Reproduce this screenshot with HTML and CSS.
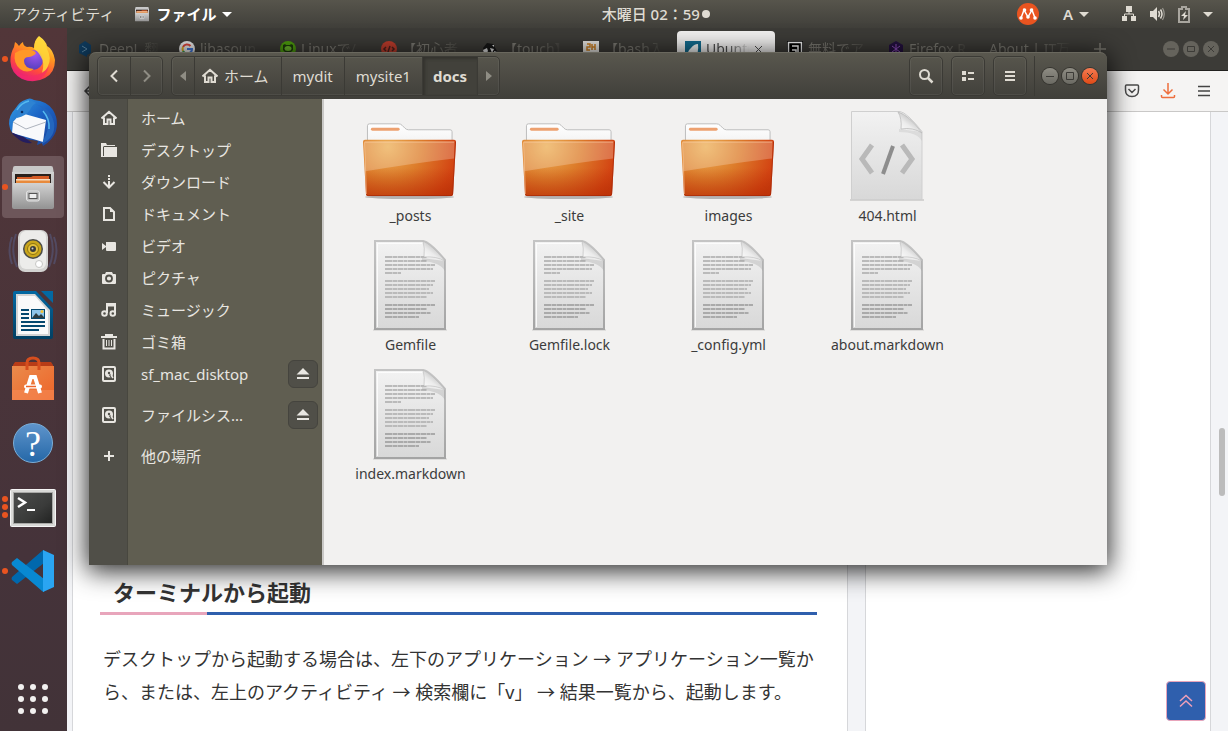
FILE: index.html
```html
<!DOCTYPE html>
<html lang="ja">
<head>
    <meta charset="UTF-8">
    <title>docs</title>
    <link rel="stylesheet" href="styles.css">
</head>
<body>
    <!-- Shared icons -->
    <svg class="defs" aria-hidden="true">
        <defs>
            <radialGradient id="folderFill" gradientUnits="userSpaceOnUse" cx="26" cy="40" r="76">
                <stop offset="0" stop-color="#ecae55"/>
                <stop offset="0.45" stop-color="#dd7d2b"/>
                <stop offset="0.9" stop-color="#d34513"/>
                <stop offset="1" stop-color="#cc3e10"/>
            </radialGradient>
            <linearGradient id="folderShade" x1="0" y1="0" x2="0" y2="1">
                <stop offset="0.5" stop-color="#b02800" stop-opacity="0"/>
                <stop offset="1" stop-color="#b02800" stop-opacity="0.5"/>
            </linearGradient>
            <linearGradient id="paper" x1="0" y1="0" x2="0" y2="1">
                <stop offset="0" stop-color="#f2f2f2"/>
                <stop offset="1" stop-color="#d8d8d8"/>
            </linearGradient>
            <linearGradient id="paperEdge" x1="0" y1="0" x2="0" y2="1">
                <stop offset="0" stop-color="#c4c4c4"/>
                <stop offset="1" stop-color="#a4a4a4"/>
            </linearGradient>
            <linearGradient id="curl" x1="0" y1="1" x2="0.6" y2="0.3">
                <stop offset="0" stop-color="#ffffff"/>
                <stop offset="0.6" stop-color="#ececec"/>
                <stop offset="1" stop-color="#c4c4c4"/>
            </linearGradient>
            <linearGradient id="tabPaper" x1="0" y1="0" x2="0" y2="1">
                <stop offset="0" stop-color="#ffffff"/>
                <stop offset="0.7" stop-color="#f4f4f4"/>
                <stop offset="1" stop-color="#cfcfcf"/>
            </linearGradient>
            <linearGradient id="fox" x1="0.8" y1="0" x2="0.3" y2="1">
                <stop offset="0" stop-color="#fff44f"/>
                <stop offset="0.35" stop-color="#ff9a1f"/>
                <stop offset="0.7" stop-color="#ff4a3d"/>
                <stop offset="1" stop-color="#e31587"/>
            </linearGradient>
            <radialGradient id="foxGlobe" cx="0.6" cy="0.2" r="0.9">
                <stop offset="0" stop-color="#a257f0"/>
                <stop offset="1" stop-color="#4b3cb8"/>
            </radialGradient>
            <linearGradient id="bird" x1="0" y1="0" x2="1" y2="1">
                <stop offset="0" stop-color="#35a0e6"/>
                <stop offset="0.5" stop-color="#1b62c4"/>
                <stop offset="1" stop-color="#1c3f94"/>
            </linearGradient>
            <linearGradient id="steel" x1="0" y1="0" x2="0" y2="1">
                <stop offset="0" stop-color="#d2d2d2"/>
                <stop offset="1" stop-color="#959595"/>
            </linearGradient>
            <linearGradient id="writer" x1="0" y1="0" x2="0" y2="1">
                <stop offset="0" stop-color="#0369a3"/>
                <stop offset="1" stop-color="#023f62"/>
            </linearGradient>
            <linearGradient id="bag" x1="0" y1="0" x2="1" y2="1">
                <stop offset="0" stop-color="#ea8b4c"/>
                <stop offset="1" stop-color="#ee6428"/>
            </linearGradient>
            <linearGradient id="screen" x1="0" y1="0" x2="1" y2="1">
                <stop offset="0" stop-color="#4c4d4c"/>
                <stop offset="0.6" stop-color="#3a3b3a"/>
                <stop offset="1" stop-color="#222322"/>
            </linearGradient>
        </defs>

        <symbol id="folder" viewBox="1 1 97 97">
            <ellipse cx="48" cy="91" rx="45" ry="2" fill="#000" opacity="0.25"/>
            <path d="M5.500 40V19q0-2 2-2H37q2 0 3.500 1.500l3 3q1.500 1.500 3.500 1.500H89q2 0 2 2V42z" fill="url(#tabPaper)" stroke="#bdbdbd"/>
            <rect x="9" y="21" width="29" height="3" rx="1.500" fill="#eda170"/>
            <path d="M3 33H93q2 0 2 2l-3 53q0 2-2 2H6q-2 0-2-2L1 35q0-2 2-2z" fill="url(#folderFill)"/>
            <path d="M3 33H93q2 0 2 2l-3 53q0 2-2 2H6q-2 0-2-2L1 35q0-2 2-2z" fill="url(#folderShade)"/>
            <path d="M2.500 34.500H93.500L93 52Q50 57 3.500 65z" fill="#fff" opacity="0.23"/>
            <path d="M4.500 88L2.500 35.500M3 35.500H93" stroke="#ffd9b0" opacity="0.5" fill="none"/>
            <path d="M94.500 35l-3 53q0 1.500-2 1.500H6.500q-2 0-2-1.500" stroke="#a42508" opacity="0.65" fill="none"/>
        </symbol>

        <symbol id="textfile" viewBox="1 0 96 96">
            <path d="M11 92H85V94H11z" fill="#000" opacity="0.08"/>
            <path d="M13 4H61q7 1 22 19V92H13z" fill="url(#paper)" stroke="url(#paperEdge)" stroke-width="2"/>
            <path d="M15.500 90V6.500H60" fill="none" stroke="#fff" opacity="0.8"/>
            <g stroke="#bababa" stroke-width="2" stroke-dasharray="7.500 0.500 4.500 0.500 5.500 0.500 3.500 0.500">
                <path d="M23 20h42M23 24h42M23 28h50M23 32h48M23 36h16"/>
                <path d="M23 44h50M23 48h48M23 52h44M23 56h48M23 60h42"/>
                <path d="M23 68h50M23 72h42M23 76h46M23 80h34" stroke="#aaa"/>
            </g>
            <path d="M60 21l23 3v10q-5-9-23-10z" fill="#999" opacity="0.3"/>
            <path d="M61 4q2 7 1 16 12-1 21 4Q70 8 61 4z" fill="url(#curl)" stroke="#b8b8b8" stroke-width="0.600"/>
        </symbol>

        <symbol id="htmlfile" viewBox="1 0 96 96">
            <path d="M11 91H85V93H11z" fill="#000" opacity="0.12"/>
            <path d="M12.500 3.500H61q7 1 22 20V91.500H12.500z" fill="url(#paper)" stroke="#cfcfcf"/>
            <path d="M33 37L23 51 33 65M63 37L73 51 63 65" fill="none" stroke="#b9b9b9" stroke-width="5"/>
            <path d="M54 38L44 66" stroke="#8d8d8d" stroke-width="4"/>
            <path d="M60 21l23 3v9q-5-9-23-9z" fill="#aaa" opacity="0.25"/>
            <path d="M59 4q4 6 3 17 12-2 21 4Q70 7 59 4z" fill="url(#curl)" stroke="#bbb" stroke-width="0.800"/>
        </symbol>

        <symbol id="home" viewBox="0 0 16 16">
            <path d="M0.500 8.500L8 1.800l7.500 6.700M3 7.500V14h3.500V9.500h3V14H13V7.500" fill="none" stroke="currentColor" stroke-width="2"/>
        </symbol>

        <symbol id="disk" viewBox="0 0 16 16">
            <rect x="2" y="1" width="12" height="14" rx="1" fill="none" stroke="currentColor" stroke-width="2"/>
            <circle cx="8" cy="7.500" r="4" fill="currentColor"/>
            <circle cx="8" cy="7" r="1.200" fill="#504f48"/>
            <path d="M8.500 8.500l3 4" stroke="#504f48" stroke-width="1.500"/>
            <path d="M10 9l2 3" stroke="currentColor" stroke-width="1.500"/>
        </symbol>

        <symbol id="eject" viewBox="0 0 14 14">
            <path d="M7 1l6.500 6.500H.5zM1 10h12v2H1z" fill="currentColor"/>
        </symbol>

        <symbol id="cabinet" viewBox="0 0 48 48">
            <path d="M4 5q0-2 2-2h36q2 0 2 2l1 6H3z" fill="#c8c8c8"/>
            <path d="M3 9h42v35q0 2-2 2H5q-2 0-2-2z" fill="url(#steel)"/>
            <path d="M6 11h36v12H6z" fill="#2a201c"/>
            <path d="M8 14h14l2-1h16v8H8z" fill="#d45a24"/>
            <path d="M7 16h34v3H7z" fill="#f6dcc0"/>
            <path d="M7 17.500h34v5H7z" fill="#e88a3c"/>
            <path d="M4 20h40v23q0 2-2 2H6q-2 0-2-2z" fill="url(#steel)"/>
            <rect x="17.500" y="28" width="13" height="10" rx="2" fill="#bbb" stroke="#e4e4e4"/>
            <rect x="20" y="30.500" width="8" height="5" fill="#eee" stroke="#555"/>
        </symbol>
    </svg>

    <header class="topbar">
        <div class="topbar-left">
            <button class="top-item">アクティビティ</button>
            <button class="top-item app-menu">
                <svg width="16" height="16"><use href="#cabinet"/></svg>
                ファイル
                <i class="caret"></i>
            </button>
        </div>
        <button class="top-item clock">木曜日 02：59<i class="notice"></i></button>
        <div class="topbar-right">
            <svg width="22" height="22" viewBox="0 0 22 22">
                <circle cx="11" cy="11" r="11" fill="#e95420"/>
                <path d="M4 15L7 7l4 7 4-7 3 8" fill="none" stroke="#fff" stroke-width="1.500"/>
                <g fill="#fff"><circle cx="4" cy="15" r="1.800"/><circle cx="7.500" cy="7" r="1.800"/><circle cx="11" cy="14" r="1.800"/><circle cx="14.500" cy="7" r="1.800"/><circle cx="18" cy="15" r="1.800"/></g>
            </svg>
            <button class="top-item input-menu">A<i class="caret"></i></button>
            <button class="top-item system-menu" aria-label="システム">
                <svg width="16" height="16" viewBox="0 0 16 16"><path d="M5 0h6v6H5zM1 10h5v5H1zM10 10h5v5h-5z" fill="#dfdbd2"/><path d="M8 6v2M3.500 10V8h9v2" fill="none" stroke="#dfdbd2"/></svg>
                <svg width="16" height="16" viewBox="0 0 16 16"><path d="M1 5h3l4-4v14l-4-4H1z" fill="#dfdbd2"/><path d="M9.500 5q2 3 0 6M11.500 3.500q3 4.500 0 9" stroke="#dfdbd2" stroke-width="1.500" fill="none"/><path d="M13.500 2q3.500 6 0 12" stroke="#99978f" stroke-width="1.200" fill="none"/></svg>
                <svg width="14" height="17" viewBox="0 0 14 17"><path d="M5 1h4v2h3v13H2V3h3z" fill="none" stroke="#a9a69f" stroke-width="2"/><path d="M9 5L4 10h3l-1 4 5-5H8z" fill="#dfdbd2"/></svg>
                <i class="caret"></i>
            </button>
        </div>
    </header>

    <div class="desktop">
        <nav class="dock">
            <button class="dock-item" aria-label="Firefox">
                <span class="running"><i></i></span>
                <svg width="48" height="48" viewBox="0 0 48 48">
                    <path d="M30 1q7 5 8 10 6 3 8 14 0 13-10 18-11 6-23 1Q2 38 1.500 27 1 19 5 12l1-5q2 1 4 4 2-3 4-4 0 4 4 5 4-1 7 1 0-8 5-12z" fill="url(#fox)"/>
                    <circle cx="24" cy="25" r="10" fill="url(#foxGlobe)"/>
                    <path d="M30 2q7 5 8 12 5 9 1 17-2 5-6 7 3-10-1-16-3-6-7-8 0-8 5-12z" fill="#ffd83a" opacity="0.85"/>
                    <path d="M6 18q6-4 12-3 6-1 9 3-2 3-7 4-5 0-5 4 0 7 10 8-7 5-14 0-7-6-5-16z" fill="#ff9828"/>
                    <path d="M3 33q7 9 19 8 12-1 18-10-2 10-12 14-15 4-25-12z" fill="#f52b68" opacity="0.65"/>
                </svg>
            </button>
            <button class="dock-item" aria-label="Thunderbird">
                <svg width="50" height="50" viewBox="0 0 50 50">
                    <path d="M17 2q5-3 9 0 13 1 19 10 6 10 3 21-3 9-13 15l-1-3-5 2 1-4-18-3Q2 37 1 26 1 17 7 11q5-8 10-9z" fill="url(#bird)"/>
                    <path d="M5 24l8-9 25 7-3 22-10-3L4 35z" fill="#f8f9fb"/>
                    <path d="M5 24l13 7 20-7" fill="none" stroke="#adb3bd"/>
                    <path d="M15 4q7-4 13 1-4 2-6 7-4 6-13 8 0-11 6-16z" fill="#2e83d2"/>
                    <path d="M27 6q10 2 12 15 3 10-4 22l-1 3q14-7 12-21Q43 10 27 6z" fill="#2466be"/>
                    <path d="M3 34q6 3 13 5l8 6q-9 1-15-5-4-3-6-6z" fill="#251d5e"/>
                    <path d="M9 12q4-7 12-9M35 13q7 8 6 18" fill="none" stroke="#54b8ef" stroke-width="1.500"/>
                    <circle cx="14" cy="14" r="1.300" fill="#0b2c60"/>
                </svg>
            </button>
            <button class="dock-item active" aria-label="ファイル">
                <span class="running"><i></i></span>
                <svg width="48" height="48"><use href="#cabinet"/></svg>
            </button>
            <button class="dock-item" aria-label="Rhythmbox">
                <svg width="50" height="50" viewBox="0 0 50 50">
                    <path d="M8 8q-6 16 1 33M4 11q-5 13 0 27M42 8q6 16-1 33M46 11q5 13 0 27" fill="none" stroke="#57608a" stroke-width="2" opacity="0.5"/>
                    <rect x="10" y="4" width="30" height="42" rx="7" fill="#d3d3d1"/>
                    <rect x="12" y="5" width="26" height="38" rx="6" fill="#ececea"/>
                    <circle cx="25" cy="23" r="10" fill="#4b4c48"/>
                    <circle cx="25" cy="23" r="8.500" fill="#c9a51b"/>
                    <circle cx="25" cy="23" r="5.500" fill="#e4c13a" stroke="#8d7411"/>
                    <circle cx="25" cy="23" r="3" fill="#3b3c3a"/>
                    <circle cx="24.500" cy="22.500" r="1" fill="#ccc"/>
                    <circle cx="31" cy="38" r="3.500" fill="#fff" stroke="#c6c6c4"/>
                </svg>
            </button>
            <button class="dock-item" aria-label="LibreOffice Writer">
                <svg width="48" height="48" viewBox="0 0 48 48">
                    <path d="M6 0h21l17 18v28q0 2-2 2H6q-2 0-2-2V2q0-2 2-2z" fill="url(#writer)"/>
                    <path d="M32 0h12v12z" fill="#0369a3"/>
                    <path d="M7 3h19l15 16v26H7z" fill="#d4d4d4"/>
                    <path d="M9 5h17l13 15v23H9z" fill="#fafafa"/>
                    <path d="M12 19h8M12 23h8M12 27h8M12 31h24M12 35h24M12 39h18" stroke="#05486f" stroke-width="2"/>
                    <rect x="22.500" y="18.500" width="13" height="9" fill="#8ec5ea" stroke="#05486f"/>
                    <circle cx="33" cy="20.500" r="1.500" fill="#f5c235"/>
                    <path d="M23 27l4-5 3 3 2-2 3 3v1z" fill="#2d3c40"/>
                </svg>
            </button>
            <button class="dock-item" aria-label="Ubuntu Software">
                <svg width="48" height="48" viewBox="0 0 48 48">
                    <path d="M4 10l2-3h36l2 3v4H4z" fill="#b83c17"/>
                    <path d="M3 11h42v34H3z" fill="url(#bag)"/>
                    <path d="M3 35h42v10H3z" fill="#f58a56" opacity="0.6"/>
                    <path d="M18 15V8q0-5 6-5t6 5v7" fill="none" stroke="#d64e1e" stroke-width="3"/>
                    <path d="M17 38l5-16h4l5 16" fill="none" stroke="#fff" stroke-width="4"/>
                    <rect x="15" y="29.500" width="18" height="4" rx="2" fill="#fff"/>
                    <path d="M17 31.500h10" stroke="#ee6428" stroke-width="1.500"/>
                </svg>
            </button>
            <button class="dock-item" aria-label="ヘルプ">
                <span class="help-icon">?</span>
            </button>
            <button class="dock-item" aria-label="端末">
                <span class="running"><i></i><i></i><i></i></span>
                <svg width="48" height="48" viewBox="0 0 48 48">
                    <rect x="1.500" y="6.500" width="45" height="37" rx="1" fill="#d9d9d7" stroke="#f5f5f5"/>
                    <path d="M4 9h40v32H4z" fill="#a9a9a7"/>
                    <path d="M5 10h38v30H5z" fill="url(#screen)"/>
                    <path d="M9 15l7 4.500-7 4.500" fill="none" stroke="#fff" stroke-width="2.500"/>
                    <path d="M18 27h8" stroke="#fff" stroke-width="2"/>
                </svg>
            </button>
            <button class="dock-item" aria-label="Visual Studio Code">
                <span class="running"><i></i></span>
                <svg width="44" height="44" viewBox="0 0 44 44">
                    <path d="M1 31l5 4L33 14V1q-1 0-2 1L1 28q-1 2 0 3z" fill="#0068ad"/>
                    <path d="M1 13l5-4L33 30v13q-1 0-2-1L1 16q-1-2 0-3z" fill="#0889d2"/>
                    <path d="M32 1l11 5v32l-11 5z" fill="#2aa5f2"/>
                </svg>
            </button>
            <button class="dock-item apps" aria-label="アプリケーションを表示する">
                <svg width="32" height="32" viewBox="0 0 32 32" fill="#f2f1f0">
                    <circle cx="4" cy="4" r="3"/><circle cx="16" cy="4" r="3"/><circle cx="28" cy="4" r="3"/>
                    <circle cx="4" cy="16" r="3"/><circle cx="16" cy="16" r="3"/><circle cx="28" cy="16" r="3"/>
                    <circle cx="4" cy="28" r="3"/><circle cx="16" cy="28" r="3"/><circle cx="28" cy="28" r="3"/>
                </svg>
            </button>
        </nav>

        <div class="browser">
            <div class="tabs">
                <button class="tab"><svg width="16" height="16" viewBox="0 0 16 16"><path d="M7 0l6 4v8l-4 2v2l-2-1-6-3V4z" fill="#0f3a5c"/><path d="M4 5l5 3-5 3" stroke="#537891" fill="none"/></svg><span>DeepL 翻</span></button>
                <button class="tab"><svg width="16" height="16" viewBox="0 0 16 16"><circle cx="8" cy="8" r="8" fill="#e8e8e8"/><path d="M11.500 5A4.500 4.500 0 0 0 4 6" stroke="#d9453a" stroke-width="2" fill="none"/><path d="M4 6a5 5 0 0 0 0 4" stroke="#e6b020" stroke-width="2" fill="none"/><path d="M4 10a4.500 4.500 0 0 0 6 2" stroke="#35994c" stroke-width="2" fill="none"/><path d="M8 8h5q0 3-3 4.500" stroke="#4078dd" stroke-width="2" fill="none"/></svg><span>libasoun</span></button>
                <button class="tab"><svg width="16" height="16" viewBox="0 0 16 16"><circle cx="8" cy="8" r="8" fill="#4c9c0d"/><path d="M3 4l2-1 1 1h4l1-1 2 1v5q-2 3-5 3T3 9z" fill="#1c3a0a"/><ellipse cx="8" cy="7.500" rx="3.500" ry="2.500" fill="#6ab52c"/></svg><span>Linuxで/</span></button>
                <button class="tab"><svg width="16" height="16" viewBox="0 0 16 16"><circle cx="8" cy="8" r="8" fill="#bd3c2c"/><path d="M5 6L3 8l2 2M11 6l2 2-2 2M9 5l-2 6" stroke="#4d211c" stroke-width="1.500" fill="none"/></svg><span>【初心者</span></button>
                <button class="tab"><svg width="16" height="16" viewBox="0 0 16 16"><path d="M1 7l4-5 6 1 4 7-3 5H3z" fill="#161616"/><path d="M1 9l4-2 1 3-3 5zM8 7l4 1-2 4zM10 4h2v2zM12 10l3 1-2 4z" fill="#ddd"/></svg><span>【touch】</span></button>
                <button class="tab"><svg width="16" height="16" viewBox="0 0 16 16"><path d="M0 0h16v16H0z" fill="#e5e3df"/><path d="M4 3h3v3H4v3h3M9 3v6M12 3v6M9 6h3" stroke="#c97d21" stroke-width="1.500" fill="none"/></svg><span>【bash入</span></button>
                <button class="tab selected"><svg width="16" height="16" viewBox="0 0 16 16"><path d="M0 0h16v16H0z" fill="#136b8e"/><path d="M13 3q1 9-3 13H4q-3-5 2-9 3-4 7-4z" fill="#f1f3f3"/></svg><span>Ubuntu</span><svg width="9" height="9" viewBox="0 0 9 9"><path d="M1 1l7 7M8 1L1 8" stroke="#4c4c4c"/></svg></button>
                <button class="tab"><svg width="16" height="16" viewBox="0 0 16 16"><path d="M0 0h16v16H0z" fill="#000"/><path d="M1.500 1.500h13v13h-13zM5 5h6v9M5 9h4v5" stroke="#eee" stroke-width="1.500" fill="none"/></svg><span>無料でア</span></button>
                <button class="tab"><svg width="16" height="16" viewBox="0 0 16 16"><path d="M8 0l7 4v8l-7 4-7-4V4z" fill="#24113f"/><path d="M8 3v10M4 5l8 6M12 5l-8 6" stroke="#8d4db8" fill="none"/></svg><span>Firefox R</span></button>
                <button class="tab"><span>About | IT万</span></button>
                <button class="new-tab" aria-label="新しいタブ"><svg width="14" height="14" viewBox="0 0 14 14"><path d="M7 1v12M1 7h12" stroke="#77756e" stroke-width="1.500"/></svg></button>
                <div class="controls dim">
                    <button aria-label="最小化"><svg width="16" height="16" viewBox="0 0 16 16"><path d="M4 8h8"/></svg></button>
                    <button aria-label="最大化"><svg width="16" height="16" viewBox="0 0 16 16"><path d="M4.500 5.500h7v5h-7z"/></svg></button>
                    <button aria-label="閉じる"><svg width="16" height="16" viewBox="0 0 16 16"><path d="M5 5l6 6M11 5l-6 6"/></svg></button>
                </div>
            </div>
            <div class="toolbar">
                <button aria-label="戻る"><svg width="16" height="16" viewBox="0 0 16 16"><path d="M15 8H2M7 3L2 8l5 5" fill="none" stroke="#444" stroke-width="1.500"/></svg></button>
                <div class="toolbar-end">
                    <button aria-label="Pocket"><svg width="16" height="16" viewBox="0 0 16 16"><path d="M2.500 2h11q1 0 1 1v4q0 6.500-6.500 6.500T1.500 7V3q0-1 1-1zM4.500 6L8 9.500 11.500 6" fill="none" stroke="#4a4a4a" stroke-width="1.500"/></svg></button>
                    <button aria-label="ダウンロード"><svg width="16" height="16" viewBox="0 0 16 16"><path d="M8 0v11M3.500 6.500L8 11l4.500-4.500M1.500 12v1.500q0 1 1 1h11q1 0 1-1V12" fill="none" stroke="#ee6e3d" stroke-width="1.500"/></svg></button>
                    <button aria-label="メニュー"><svg width="16" height="16" viewBox="0 0 16 16"><path d="M2 3.500h12M2 8h12M2 12.500h12" stroke="#444" stroke-width="1.500"/></svg></button>
                </div>
            </div>
            <div class="page">
                <article class="article">
                    <h2>ターミナルから起動</h2>
                    <p>デスクトップから起動する場合は、左下のアプリケーション → アプリケーション一覧から、または、左上のアクティビティ → 検索欄に「v」 → 結果一覧から、起動します。</p>
                </article>
                <aside class="side"></aside>
                <div class="scrollbar"></div>
                <button class="to-top" aria-label="トップへ戻る"><svg width="14" height="14" viewBox="0 0 14 14"><path d="M1 7l6-5.500L13 7M1 12.500L7 7l6 5.500" fill="none" stroke="#f0a0b8" stroke-width="1.500"/></svg></button>
            </div>
        </div>
    </div>

    <section class="window">
        <header class="titlebar">
            <div class="linked">
                <button class="nav-btn" aria-label="戻る"><svg width="16" height="16" viewBox="0 0 16 16"><path d="M11 2.500L5.500 8l5.500 5.500" fill="none" stroke="currentColor" stroke-width="2"/></svg></button>
                <button class="nav-btn off" aria-label="進む"><svg width="16" height="16" viewBox="0 0 16 16"><path d="M5 2.500L10.500 8 5 13.500" fill="none" stroke="currentColor" stroke-width="2"/></svg></button>
            </div>
            <div class="linked path">
                <button class="path-arrow off" aria-label="左へ"><svg width="6" height="10" viewBox="0 0 6 10"><path d="M6 0v10L0 5z" fill="currentColor"/></svg></button>
                <button class="crumb"><svg width="16" height="16"><use href="#home"/></svg>ホーム</button>
                <button class="crumb">mydit</button>
                <button class="crumb">mysite1</button>
                <button class="crumb current">docs</button>
                <button class="path-arrow off" aria-label="右へ"><svg width="6" height="10" viewBox="0 0 6 10"><path d="M0 0v10l6-5z" fill="currentColor"/></svg></button>
            </div>
            <div class="tools">
                <button class="tool" aria-label="検索"><svg width="16" height="16" viewBox="0 0 16 16"><circle cx="6.500" cy="6.500" r="4.500" fill="none" stroke="currentColor" stroke-width="2"/><path d="M10 10l4.500 4.500" stroke="currentColor" stroke-width="2.500"/></svg></button>
                <button class="tool" aria-label="表示"><svg width="16" height="16" viewBox="0 0 16 16"><path d="M2 3h4v4H2zM2 9h4v4H2zM8 4h6v2H8zM8 10h6v2H8z" fill="currentColor"/></svg></button>
                <button class="tool" aria-label="メニュー"><svg width="16" height="16" viewBox="0 0 16 16"><path d="M3 3h10v2H3zM3 7h10v2H3zM3 11h10v2H3z" fill="currentColor"/></svg></button>
            </div>
            <div class="controls">
                <button aria-label="最小化"><svg width="16" height="16" viewBox="0 0 16 16"><path d="M4 8.500h8"/></svg></button>
                <button aria-label="最大化"><svg width="16" height="16" viewBox="0 0 16 16"><path d="M4.500 4.500h7v7h-7z"/></svg></button>
                <button class="close" aria-label="閉じる"><svg width="16" height="16" viewBox="0 0 16 16"><path d="M5 5l6 6M11 5l-6 6"/></svg></button>
            </div>
        </header>
        <div class="window-body">
            <nav class="places">
                <a href="#" class="place"><svg width="16" height="16"><use href="#home"/></svg><span>ホーム</span></a>
                <a href="#" class="place"><svg width="16" height="16" viewBox="0 0 16 16"><path d="M0 1h5l1 2h8v1H3l-1 1v9h1V5h13v10H0z" fill="currentColor"/></svg><span>デスクトップ</span></a>
                <a href="#" class="place"><svg width="16" height="16" viewBox="0 0 16 16"><path d="M7 1h2v2H7zM7 4h2v2H7zM7 7h2v5H7z" fill="currentColor"/><path d="M2.500 8L8 13.500 13.500 8" fill="none" stroke="currentColor" stroke-width="2"/></svg><span>ダウンロード</span></a>
                <a href="#" class="place"><svg width="16" height="16" viewBox="0 0 16 16"><path d="M3 2h6l4 4v8H3z" fill="none" stroke="currentColor" stroke-width="2"/><path d="M9 2v4h4z" fill="currentColor"/></svg><span>ドキュメント</span></a>
                <a href="#" class="place"><svg width="16" height="16" viewBox="0 0 16 16"><path d="M5 4h9q1 0 1 1v7q0 1-1 1H6q-1 0-1-1V9l-4 3V5l4 3z" fill="currentColor"/></svg><span>ビデオ</span></a>
                <a href="#" class="place"><svg width="16" height="16" viewBox="0 0 16 16"><path d="M5 2h6l1 2h2q1 0 1 1v8q0 1-1 1H2q-1 0-1-1V5q0-1 1-1h2z" fill="currentColor"/><circle cx="8" cy="8.500" r="3" fill="none" stroke="#504f48" stroke-width="1.800"/></svg><span>ピクチャ</span></a>
                <a href="#" class="place"><svg width="16" height="16" viewBox="0 0 16 16"><path d="M6 11V2h8v9M6 3.500h8" fill="none" stroke="currentColor" stroke-width="2"/><circle cx="3.500" cy="11.500" r="2.300" fill="none" stroke="currentColor" stroke-width="2"/><circle cx="11.800" cy="11.500" r="2.300" fill="none" stroke="currentColor" stroke-width="2"/></svg><span>ミュージック</span></a>
                <a href="#" class="place"><svg width="16" height="16" viewBox="0 0 16 16"><path d="M0 2h4V0h8v2h4v2H0z" fill="currentColor"/><path d="M2.500 5v9.500h11V5" fill="none" stroke="currentColor" stroke-width="2"/><path d="M5.500 6v6M8 6v6M10.500 6v6" stroke="currentColor"/></svg><span>ゴミ箱</span></a>
                <div class="place volume"><svg width="16" height="16"><use href="#disk"/></svg><a href="#">sf_mac_disktop</a><button class="eject" aria-label="取り出す"><svg width="14" height="14"><use href="#eject"/></svg></button></div>
                <div class="place volume spaced"><svg width="16" height="16"><use href="#disk"/></svg><a href="#">ファイルシス...</a><button class="eject" aria-label="取り出す"><svg width="14" height="14"><use href="#eject"/></svg></button></div>
                <a href="#" class="place spaced"><svg width="16" height="16" viewBox="0 0 16 16"><path d="M8 3v10M3 8h10" stroke="currentColor" stroke-width="2"/></svg><span>他の場所</span></a>
            </nav>
            <main class="files">
                <button class="file"><svg width="96" height="96"><use href="#folder"/></svg>_posts</button>
                <button class="file"><svg width="96" height="96"><use href="#folder"/></svg>_site</button>
                <button class="file"><svg width="96" height="96"><use href="#folder"/></svg>images</button>
                <button class="file"><svg width="96" height="96"><use href="#htmlfile"/></svg>404.html</button>
                <button class="file"><svg width="96" height="96"><use href="#textfile"/></svg>Gemfile</button>
                <button class="file"><svg width="96" height="96"><use href="#textfile"/></svg>Gemfile.lock</button>
                <button class="file"><svg width="96" height="96"><use href="#textfile"/></svg>_config.yml</button>
                <button class="file"><svg width="96" height="96"><use href="#textfile"/></svg>about.markdown</button>
                <button class="file"><svg width="96" height="96"><use href="#textfile"/></svg>index.markdown</button>
            </main>
        </div>
    </section>
</body>
</html>
```
FILE: styles.css
```css
* {
    box-sizing: border-box;
}

body {
    margin: 0;
    height: 100vh;
    overflow: hidden;
    display: flex;
    flex-direction: column;
    font-family: 'Noto Sans', 'Noto Sans CJK JP', sans-serif;
    font-size: 15px;
    line-height: 20px;
}

button {
    margin: 0;
    padding: 0;
    border: none;
    background: none;
    color: inherit;
    font: inherit;
}

a {
    color: inherit;
    text-decoration: none;
}

svg {
    display: block;
    flex: none;
}

.defs {
    position: absolute;
    width: 0;
    height: 0;
}

/* Top bar */
.topbar {
    flex: none;
    display: grid;
    grid-template-columns: 49% auto 1fr;
    align-items: center;
    height: 28px;
    background: linear-gradient(#57554c, #403f3a);
    color: #dfdbd2;
}

.topbar-left,
.topbar-right,
.top-item {
    display: flex;
    align-items: center;
}

.topbar-left {
    padding-left: 12px;
    gap: 20px;
}

.app-menu {
    gap: 6px;
    color: #fff;
    font-weight: bold;
}

.caret {
    border: 5px solid transparent;
    border-top-color: currentColor;
    border-bottom: none;
}

.clock {
    gap: 2px;
    font-weight: 500;
    white-space: nowrap;
}

.notice {
    width: 8px;
    height: 8px;
    border-radius: 50%;
    background: #dfdbd2;
}

.topbar-right {
    justify-content: flex-end;
    padding-right: 15px;
    gap: 24px;
}

.input-menu {
    gap: 6px;
    font-weight: 600;
    margin-right: 8px;
}

.system-menu {
    gap: 12px;
}

.desktop {
    flex: 1;
    min-height: 0;
    display: flex;
}

/* Dock */
.dock {
    flex: none;
    width: 67px;
    padding: 0 3px 1px 2px;
    display: flex;
    flex-direction: column;
    gap: 2px;
    background: linear-gradient(#523639, #45333a 75%, #423338);
}

.dock-item {
    position: relative;
    flex: none;
    height: 62px;
    display: flex;
    align-items: center;
    justify-content: center;
    border-radius: 4px;
}

.dock-item.active {
    background: #6d565a;
}

.apps {
    margin-top: auto;
}

.running {
    position: absolute;
    left: 0;
    top: 0;
    bottom: 0;
    display: flex;
    flex-direction: column;
    justify-content: center;
    gap: 2px;
}

.running i {
    width: 6px;
    height: 6px;
    border-radius: 50%;
    background: #e95420;
}

.help-icon {
    width: 40px;
    height: 40px;
    border: 1px solid #7bafd9;
    border-radius: 50%;
    background: linear-gradient(#5e94cb, #2568a8);
    color: #fff;
    font: 36px/40px 'Liberation Serif', serif;
    text-align: center;
}

/* Browser behind the file window */
.browser {
    flex: 1;
    min-width: 0;
    display: flex;
    flex-direction: column;
}

.tabs {
    flex: none;
    display: flex;
    height: 43px;
    padding: 3px 9px 0 2px;
    border-bottom: 1px solid #22211f;
    background: #3c3b37;
}

.tab {
    flex: 0 1 101px;
    min-width: 0;
    height: 36px;
    display: flex;
    align-items: center;
    gap: 5px;
    padding: 0 9px;
    color: #77756e;
    font-size: 14px;
    text-align: left;
}

.tab span {
    flex: 1;
    min-width: 0;
    overflow: hidden;
    white-space: nowrap;
    mask-image: linear-gradient(to right, #000 50%, transparent);
}

.tab.selected {
    flex-basis: 98px;
    margin: 0 3px 0 2px;
    height: 40px;
    padding: 0 12px 4px 8px;
    border-radius: 4px 4px 0 0;
    background: #f2f1f0;
    color: #4c4c4c;
}

.new-tab {
    width: 38px;
    height: 36px;
    display: flex;
    align-items: center;
    justify-content: center;
}

.controls {
    display: flex;
    align-items: center;
    gap: 4px;
}

.controls button {
    border-radius: 50%;
    background: linear-gradient(#8f8d84, #6b6a63);
    box-shadow: 0 0 0 1px #35342f;
}

.controls path {
    fill: none;
    stroke: #3c3b37;
}

.controls .close {
    background: linear-gradient(#f67b52, #df4a16);
}

.controls.dim {
    height: 36px;
    margin-left: auto;
}

.controls.dim button {
    background: #65635c;
    box-shadow: none;
}

.toolbar {
    flex: none;
    height: 41px;
    display: flex;
    align-items: center;
    justify-content: space-between;
    padding: 0 16px;
    border-bottom: 1px solid #c9c8c7;
    background: #f5f4f3;
}

.toolbar-end {
    display: flex;
    gap: 20px;
}

.page {
    position: relative;
    flex: 1;
    min-height: 0;
    display: grid;
    grid-template-columns: 776fr 346fr;
    gap: 17px;
    padding: 0 17px 0 5px;
    background: #f3f4f7;
}

.article,
.side {
    border: solid #d6d7da;
    border-width: 0 1px;
    background: #fff;
}

.article {
    display: flex;
    flex-direction: column;
    justify-content: flex-end;
    padding: 0 30px 22px 27px;
    color: #333;
    overflow: hidden;
}

h2 {
    margin: 0 0 28px;
    padding: 0 13px 4px;
    border-bottom: 3px solid;
    border-image: linear-gradient(to right, #e8a5bb 15%, #2f5fad 15%) 1;
    font-size: 22px;
    line-height: 32px;
}

.article p {
    margin: 0 0 0 3px;
    font-size: 18px;
    line-height: 33px;
}

.scrollbar {
    position: absolute;
    right: 3px;
    top: 316px;
    width: 6px;
    height: 68px;
    border-radius: 3px;
    background: #bcbcbc;
}

.to-top {
    position: absolute;
    right: 22px;
    bottom: 10px;
    width: 40px;
    height: 40px;
    display: flex;
    align-items: center;
    justify-content: center;
    border: 1px solid #e8a5bb;
    border-radius: 4px;
    background: #2f5fad;
}

/* File window */
.window {
    position: absolute;
    left: 89px;
    right: 121px;
    top: 52px;
    bottom: 166px;
    display: flex;
    flex-direction: column;
    border-radius: 7px 7px 0 0;
    box-shadow: 0 4px 26px 2px rgba(0, 0, 0, 0.85);
}

.titlebar {
    flex: none;
    display: flex;
    align-items: center;
    height: 47px;
    padding: 0 9px 0 8px;
    border-top: 1px solid #6a685e;
    border-radius: 7px 7px 0 0;
    background: linear-gradient(#59574e, #403f3a);
    color: #dfdbd2;
}

.linked {
    display: flex;
    height: 40px;
    border: 1px solid #3b3a35;
    border-radius: 5px;
    box-shadow: inset 0 0 0 1px rgba(255, 255, 255, 0.06);
}

.linked button {
    display: flex;
    align-items: center;
    justify-content: center;
}

.linked button + button {
    border-left: 1px solid #3b3a35;
}

.nav-btn {
    width: 32px;
}

.path {
    margin-left: 8px;
}

.path-arrow {
    width: 22px;
}

.off {
    color: #8f8d84;
}

.linked .crumb {
    padding: 0 11px;
    gap: 6px;
}

.linked .crumb:nth-child(2) {
    padding: 0 12px 0 7px;
}

.linked .current {
    padding: 0 10px;
    background: #42413b;
    box-shadow: inset 2px 2px 3px #33322e;
    font-weight: bold;
}

.tools {
    display: flex;
    gap: 8px;
    margin-left: auto;
    padding-right: 7px;
    border-right: 1px solid #3b3a35;
}

.tool {
    width: 34px;
    height: 40px;
    display: flex;
    align-items: center;
    justify-content: center;
    border: 1px solid #3b3a35;
    border-radius: 5px;
    box-shadow: inset 0 0 0 1px rgba(255, 255, 255, 0.06);
}

.titlebar .controls {
    margin-left: 7px;
}

.window-body {
    flex: 1;
    min-height: 0;
    display: flex;
}

.places {
    flex: none;
    width: 235px;
    padding-top: 3px;
    border-right: 2px solid #c9c8c6;
    background: linear-gradient(to right, #504f48 38px, #48473f 38px, #48473f 39px, #605e51 39px);
    color: #e8e6e1;
}

.place {
    display: flex;
    align-items: center;
    gap: 24px;
    height: 32px;
    padding: 0 4px 0 12px;
}

.spaced {
    margin-top: 9px;
}

.eject {
    width: 30px;
    height: 28px;
    margin-left: auto;
    display: flex;
    align-items: center;
    justify-content: center;
    border: 1px solid #45443e;
    border-radius: 6px;
    background: #504f48;
}

.files {
    flex: 1;
    display: grid;
    grid-template-columns: repeat(auto-fill, 159px);
    grid-auto-rows: 129px;
    align-content: start;
    padding: 9px 7px;
    background: #f2f1f0;
    color: #3c3c3c;
    font-size: 14px;
}

.file {
    display: flex;
    flex-direction: column;
    align-items: center;
    gap: 2px;
}
```
